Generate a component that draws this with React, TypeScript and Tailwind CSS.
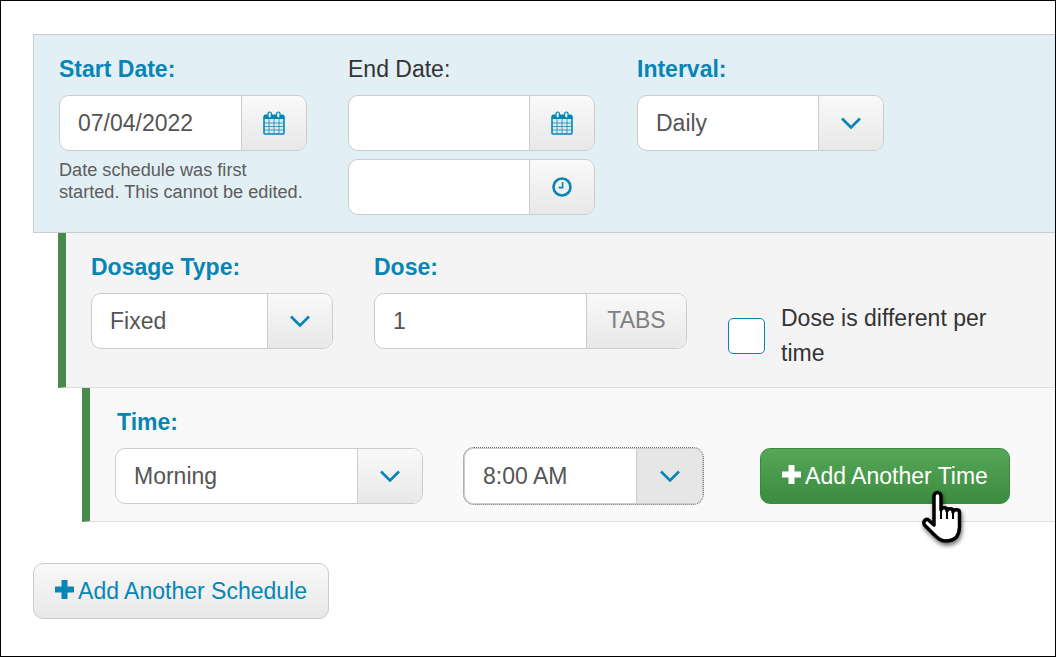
import type { ReactNode } from "react";

const labelBlue = "block text-[23px] leading-[28px] font-bold text-[#0785b5]";
const addonBg = "bg-gradient-to-b from-[#f9f9f9] to-[#e8e8e8]";

function CalendarIcon() {
  return (
    <svg width="22" height="24" viewBox="0 0 22 24" fill="none">
      <path d="M1 5.5h20V22a1 1 0 0 1-1 1H2a1 1 0 0 1-1-1z" fill="#dcebf2" stroke="#0785b5" strokeWidth="1.6" />
      <path d="M1 4.5a1 1 0 0 1 1-1h18a1 1 0 0 1 1 1V8H1z" fill="#0785b5" />
      <path d="M1 12h20M1 15.5h20M1 19h20M6 8v15M11 8v15M16 8v15" stroke="#0785b5" strokeWidth="1" opacity="0.75" />
      <rect x="5" y="1" width="3.4" height="6" rx="1.7" fill="#e2eff4" stroke="#0785b5" strokeWidth="1.2" />
      <rect x="13.6" y="1" width="3.4" height="6" rx="1.7" fill="#e2eff4" stroke="#0785b5" strokeWidth="1.2" />
    </svg>
  );
}

function ClockIcon() {
  return (
    <svg width="20" height="20" viewBox="0 0 20 20" fill="none">
      <circle cx="10" cy="10" r="8.5" stroke="#0785b5" strokeWidth="2.6" />
      <path d="M10.6 5v5.600H6.600" stroke="#0785b5" strokeWidth="1.6" />
    </svg>
  );
}

function Chevron() {
  return (
    <svg width="20" height="12" viewBox="0 0 20 12" fill="none">
      <path d="M1 1.500 10 10.500l9-9" stroke="#0785b5" strokeWidth="2.6" />
    </svg>
  );
}

function Plus({ color }: { color: string }) {
  return (
    <svg width="19" height="19" viewBox="0 0 19 19" className="shrink-0 -translate-y-0.5">
      <path d="M7 0h5a.5.5 0 0 1 .5.5v6h6a.5.5 0 0 1 .5.5v5a.5.5 0 0 1-.5.5h-6v6a.5.5 0 0 1-.5.5H7a.5.5 0 0 1-.5-.5v-6h-6A.5.5 0 0 1 0 12V7a.5.5 0 0 1 .5-.5h6v-6A.5.5 0 0 1 7 0z" fill={color} />
    </svg>
  );
}

function HandCursor() {
  return (
    <svg
      width="50"
      height="62"
      viewBox="0 0 50 62"
      fill="none"
      className="absolute left-[155px] top-[40px] drop-shadow-[1px_3px_2px_rgba(0,0,0,0.55)]"
    >
      <path
        d="M19 27V8a3.500 3.500 0 0 1 7 0V22c0-3 6-3 6 0v1c0-3 6-3 6 0v1c0-3 6.500-3 6.500 0v15c0 5-1 7-3 10-2 2-5 4-11 4-5 0-8-3-12-7l-9-9c-2-3 1-7 4-5l5.500 5z"
        fill="#fff"
        stroke="#000"
        strokeWidth="3.5"
        strokeLinejoin="round"
      />
      <path d="M26 22v9M32 23v8M38 24v7" stroke="#000" strokeWidth="2" />
    </svg>
  );
}

// input with a button stuck on the right side
function Field({
  width,
  addonWidth,
  value,
  children,
  focused,
}: {
  width: string;
  addonWidth: string;
  value?: string;
  children: ReactNode;
  focused?: boolean;
}) {
  return (
    <div
      className={`${width} h-14 flex rounded-[10px] border border-[#cccccc] bg-white overflow-hidden ${
        focused ? "outline-1 outline-dotted outline-[#666]" : ""
      }`}
    >
      <div className="flex-1 pl-[18px] flex items-center text-[23px] text-[#555]">{value}</div>
      <div
        className={`${addonWidth} flex items-center justify-center border-l border-[#cccccc] ${
          focused ? "bg-[#e6e6e6]" : addonBg
        }`}
      >
        {children}
      </div>
    </div>
  );
}

export default function App() {
  return (
    <div className="relative w-[1056px] h-[657px] overflow-hidden bg-white border border-black font-['Liberation_Sans',Arial,sans-serif]">
      <div className="pt-[33px] pl-[32px]">
        {/* Date range */}
        <div className="h-[199px] bg-[#e2eff4] border border-r-0 border-[#cccccc] pt-[20px] pl-[25px] flex gap-[41px]">
          <div className="w-[248px]">
            <span className={labelBlue}>Start Date:</span>
            <div className="mt-[12px]">
              <Field width="w-[248px]" addonWidth="w-[65px]" value="07/04/2022">
                <CalendarIcon />
              </Field>
            </div>
            <p className="mt-[8px] text-[18.15px] leading-[22px] text-[#5c5c5c] whitespace-nowrap">
              Date schedule was first
              <br />
              started. This cannot be edited.
            </p>
          </div>
          <div className="w-[247px]">
            <span className="block text-[23px] leading-[28px] text-[#333]">End Date:</span>
            <div className="mt-[12px] flex flex-col gap-2">
              <Field width="w-[247px]" addonWidth="w-[65px]">
                <CalendarIcon />
              </Field>
              <Field width="w-[247px]" addonWidth="w-[65px]">
                <ClockIcon />
              </Field>
            </div>
          </div>
          <div className="ml-px w-[247px]">
            <span className={labelBlue}>Interval:</span>
            <div className="mt-[12px]">
              <Field width="w-[247px]" addonWidth="w-[65px]" value="Daily">
                <Chevron />
              </Field>
            </div>
          </div>
        </div>

        {/* Dosage */}
        <div className="ml-[25px] h-[155px] bg-[#f4f4f4] border-l-8 border-l-[#4a8a4c] border-b border-b-[#dddddd] pl-[25px] pt-[20px] flex">
          <div className="w-[242px]">
            <span className={labelBlue}>Dosage Type:</span>
            <div className="mt-[12px]">
              <Field width="w-[242px]" addonWidth="w-[65px]" value="Fixed">
                <Chevron />
              </Field>
            </div>
          </div>
          <div className="ml-[41px] w-[313px]">
            <span className={labelBlue}>Dose:</span>
            <div className="mt-[12px]">
              <Field width="w-[313px]" addonWidth="w-[100px]" value="1">
                <span className="pb-[2px] text-[23px] text-[#808080]">TABS</span>
              </Field>
            </div>
          </div>
          <div className="ml-[41px] mt-[48px] flex">
            <div className="w-[37px] h-[36px] mt-[17px] bg-white border border-[#0785b5] rounded-[5px]" />
            <p className="ml-4 w-[240px] text-[23px] leading-[35px] text-[#333]">Dose is different per time</p>
          </div>
        </div>

        {/* Time */}
        <div className="ml-[49px] h-[134px] bg-[#f9f9f9] border-l-8 border-l-[#4a8a4c] border-b border-b-[#dddddd] pl-[25px] pt-[20px]">
          <span className={`${labelBlue} ml-[2px]`}>Time:</span>
          <div className="mt-[12px] flex">
            <Field width="w-[308px]" addonWidth="w-[65px]" value="Morning">
              <Chevron />
            </Field>
            <div className="ml-[41px]">
              <Field width="w-[239px]" addonWidth="w-[66px]" value="8:00 AM" focused>
                <Chevron />
              </Field>
            </div>
            <div className="relative ml-[57px]">
              <button className="w-[250px] h-14 rounded-[10px] border border-[#3b8a3e] bg-gradient-to-b from-[#56a658] to-[#3c8c3f] flex items-center justify-center gap-[4px] text-[23px] text-white">
                <Plus color="#ffffff" />
                Add Another Time
              </button>
              <HandCursor />
            </div>
          </div>
        </div>

        <button className="mt-[41px] w-[296px] h-14 rounded-[10px] border border-[#cccccc] bg-gradient-to-b from-[#f9f9f9] to-[#e8e8e8] flex items-center justify-center gap-[4px] text-[23px] text-[#0785b5]">
          <Plus color="#0785b5" />
          Add Another Schedule
        </button>
      </div>
    </div>
  );
}
